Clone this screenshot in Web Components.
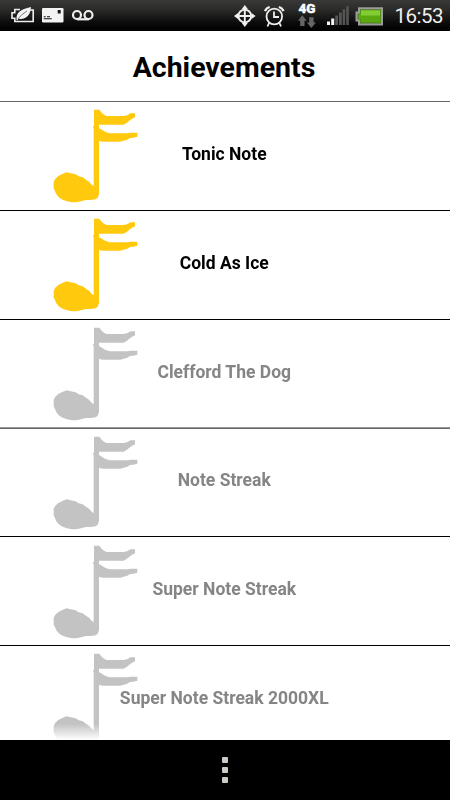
<!DOCTYPE html>
<html lang="en">
<head>
  <meta charset="utf-8">
  <title>Achievements</title>
  <style>
    body {
      margin: 0;
      font-family: Roboto, "Noto Sans", sans-serif;
    }
  </style>
</head>
<body>
  <achievements-app></achievements-app>

  <script>
    class StatusBar extends HTMLElement {
      constructor() {
        super();
        this.attachShadow({ mode: 'open' });
      }

      connectedCallback() {
        this.shadowRoot.innerHTML = `
        <style>
          :host {
            display: flex;
            justify-content: space-between;
            height: 31px;
            background: linear-gradient(#393937 0, #2b2b29 30%, #0a0a0a 75%, #000 100%);
            color: #efefef;
          }

          svg {
            display: block;
            height: 31px;
          }

          .right {
            display: flex;
          }

          .clock {
            box-sizing: border-box;
            width: 57px;
            padding: 1px 7px 0 0;
            text-align: right;
            font-size: 20.500px;
            letter-spacing: -0.5px;
            line-height: 31px;
            white-space: nowrap;
          }

          .network {
            font: 900 13.500px/14px Roboto, sans-serif;
          }
        </style>
        <svg width="110" viewBox="0 0 110 31">
          <path d="M20 9.500H14.800V12.800H12V18.200H14.800V21.500H33.200V10H30" fill="none" stroke="#eee" stroke-width="1.600"/>
          <path d="M16.500 19.500C16 13 20 9.500 31 7C30.500 15 26 20 18.800 18.800L17 20.500Z" fill="#f2f2f2"/>
          <path d="M18 19Q21 14.500 27 11" fill="none" stroke="#444" stroke-width=".7"/>
          <rect x="42" y="8" width="21.500" height="14.500" rx="1.200" fill="#f3f3f3"/>
          <path d="M57.700 10h3v3.500h-3zM43.700 16.300h2v1h-2zM47 16.300h3v1h-3zM43.700 18.300h8v1h-8z" fill="#151515"/>
          <g fill="none" stroke="#eee" stroke-width="2.200">
            <circle cx="77" cy="15" r="4"/>
            <circle cx="88.500" cy="15" r="4"/>
            <path d="M77 19.300H89"/>
          </g>
        </svg>
        <div class="right">
          <svg width="168" viewBox="225 0 168 31">
            <g fill="none" stroke="#f1f1f1" stroke-width="1.900">
              <circle cx="244.800" cy="16" r="6.400"/>
              <path d="M244.800 8V24M236.800 16H252.800"/>
            </g>
            <path d="M244.800 5l3 4h-6zM244.800 27l3-4h-6zM234 16l4-3v6zM255.600 16l-4-3v6z" fill="#f1f1f1"/>
            <g fill="none" stroke="#eee" stroke-width="1.800">
              <circle cx="274.300" cy="16.500" r="7.800"/>
              <path d="M274 11.500V17H279M269 23L267.500 26.500M279.500 23L281 26.500"/>
              <path d="M265 11.200Q266.100 8 269.700 7M283.500 11.200Q282.400 8 278.800 7" stroke-width="2.300"/>
            </g>
            <text class="network" x="298.500" y="13" textLength="17" lengthAdjust="spacingAndGlyphs" fill="#fff" stroke="#fff" stroke-width=".4">4G</text>
            <path d="M302.300 15.300l4.500 5.400H304.500v5.300H300.200v-5.300H298zM311.300 28l4.700-5.400H313.600v-5.300H309.200v5.300H306.900z" fill="#666"/>
            <path d="M327 21.500h3V25h-3zM331.200 18.500h3V25h-3z" fill="#f5f5f5"/>
            <path d="M335.200 15.500h2.800V25h-2.800zM339 12.500h2.800V25H339zM342.600 9.300h2.600V25h-2.600zM346.200 6.300h2.600V25h-2.600z" fill="#555"/>
            <path d="M359 8.200H382V24.500H359V20.500H356.500V12.500H359Z" fill="#4b7a22" stroke="#9c9c9c" stroke-width="2"/>
            <path d="M360.500 10h20v12.500h-20v-3.500h-2v-5h2z" fill="#5ba910"/>
            <path d="M361 10.500h19v5h-19z" fill="#84cc34"/>
          </svg>
          <div class="clock">16:53</div>
        </div>
        `;
      }
    }

    class MusicNote extends HTMLElement {
      constructor() {
        super();
        this.attachShadow({ mode: 'open' });
      }

      connectedCallback() {
        this.shadowRoot.innerHTML = `
        <style>
          :host {
            display: block;
            width: 86px;
            height: 94px;
          }

          svg {
            display: block;
            fill: currentColor;
          }
        </style>
        <svg width="86" height="94" viewBox="24 34 258 282">
          <path d="M147 36H163L170 45L177 51L185 55H236L246 53L257 47H270V59L260 64L252 70L246 75L236 81H162V91L173 98L182 103L194 107H247L257 105H277V117L265 120L255 121L247 126L236 129L226 132H174L162 130V289L158 300L152 305L137 307H122L108 311L94 314H81L66 311L53 306L43 300L35 291L30 281L26 272V252L31 243L40 235L52 229L65 224L77 227L92 230L101 236L113 239L123 246L132 252L140 261L146 266V91L143 87L147 84Z"/>
        </svg>
        `;
      }
    }

    class AchievementRow extends HTMLElement {
      constructor() {
        super();
        this.attachShadow({ mode: 'open' });
      }

      connectedCallback() {
        this.shadowRoot.innerHTML = `
        <style>
          :host {
            display: grid;
            grid-template-columns: 1fr;
            box-sizing: border-box;
            height: 108.8px;
            border-bottom: 1px solid #000;
            color: #858585;
            --note: #c3c3c3;
          }

          :host([unlocked]) {
            color: #000;
            --note: #ffc90e;
          }

          /* edges that fall between two pixels */
          :host([soft]) {
            border-bottom-color: #666;
            box-shadow: inset 0 -1px #999;
          }

          music-note {
            grid-area: 1 / 1;
            margin: 7.300px 0 0 53px;
            color: var(--note);
          }

          .name {
            grid-area: 1 / 1;
            align-self: center;
            padding-bottom: 4px;
            text-align: center;
            font-size: 17.500px;
            font-weight: 700;
            line-height: 24px;
            margin-right: 1.500px;
            z-index: 1;
          }
        </style>
        <music-note></music-note>
        <div class="name"><slot></slot></div>
        `;
      }
    }

    class NavBar extends HTMLElement {
      constructor() {
        super();
        this.attachShadow({ mode: 'open' });
      }

      connectedCallback() {
        this.shadowRoot.innerHTML = `
        <style>
          :host {
            display: flex;
            flex-direction: column;
            align-items: center;
            justify-content: center;
            gap: 4px;
            height: 60px;
            background: #000;
          }

          i {
            width: 6px;
            height: 6px;
            border-radius: 1px;
            background: #cdcbc3;
          }
        </style>
        <i></i><i></i><i></i>
        `;
      }
    }

    class AchievementsApp extends HTMLElement {
      constructor() {
        super();
        this.attachShadow({ mode: 'open' });
      }

      connectedCallback() {
        this.render();
      }

      achievements = [
        { name: 'Tonic Note', unlocked: true },
        { name: 'Cold As Ice', unlocked: true },
        { name: 'Clefford The Dog', soft: true },
        { name: 'Note Streak' },
        { name: 'Super Note Streak' },
        { name: 'Super Note Streak 2000XL' },
      ];

      render() {
        const rows = this.achievements.map(item => `
          <achievement-row ${item.unlocked ? 'unlocked' : ''} ${item.soft ? 'soft' : ''}>${item.name}</achievement-row>`
        ).join('');

        this.shadowRoot.innerHTML = `
        <style>
          :host {
            display: flex;
            flex-direction: column;
            height: 800px;
            background: #fff;
          }

          status-bar, nav-bar, h1 {
            flex: none;
          }

          h1 {
            box-sizing: border-box;
            height: 71.200px;
            margin: 0;
            padding-right: 2px;
            border-bottom: 1px solid #666;
            text-align: center;
            font-size: 28.500px;
            font-weight: 700;
            line-height: 74px;
          }

          .list {
            flex: 1;
            min-height: 0;
            overflow: hidden;
            -webkit-mask-image: linear-gradient(#000 calc(100% - 16px), transparent);
            mask-image: linear-gradient(#000 calc(100% - 16px), transparent);
          }
        </style>
        <status-bar></status-bar>
        <h1>Achievements</h1>
        <div class="list">${rows}</div>
        <nav-bar></nav-bar>
        `;
      }
    }

    customElements.define('status-bar', StatusBar);
    customElements.define('music-note', MusicNote);
    customElements.define('achievement-row', AchievementRow);
    customElements.define('nav-bar', NavBar);
    customElements.define('achievements-app', AchievementsApp);
  </script>
</body>
</html>
